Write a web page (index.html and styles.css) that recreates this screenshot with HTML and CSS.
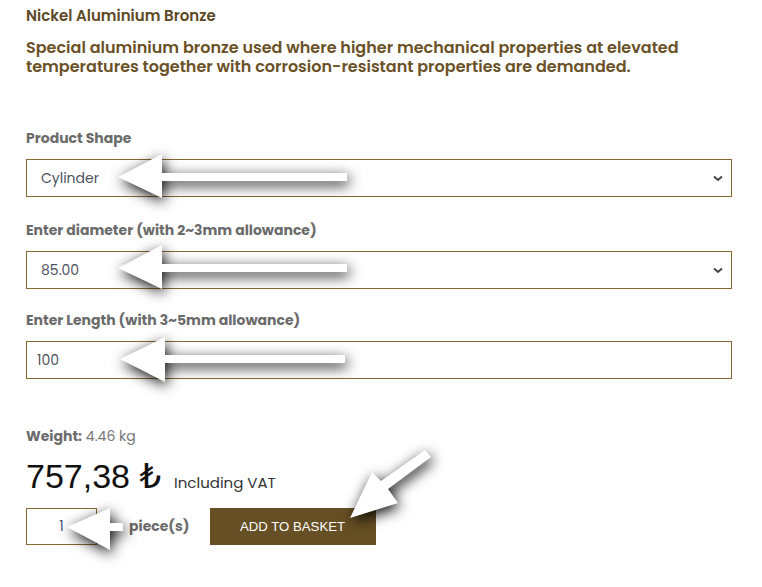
FILE: index.html
```html
<!DOCTYPE html>
<html lang="en">
<head>
    <meta charset="UTF-8">
    <title>Nickel Aluminium Bronze</title>
    <link rel="stylesheet" href="styles.css">
</head>
<body>
    <div class="product">
        <h2 class="title">Nickel Aluminium Bronze</h2>
        <p class="desc">Special aluminium bronze used where higher mechanical properties at elevated temperatures together with corrosion-resistant properties are demanded.</p>

        <div class="field">
            <label>Product Shape</label>
            <div class="select_wrap">
                <select><option>Cylinder</option></select>
                <svg class="chev" width="10" height="7" viewBox="0 0 10 7"><path d="M1 1.5 L5 5 L9 1.5" fill="none" stroke="#444" stroke-width="2"/></svg>
            </div>
        </div>
        <div class="field">
            <label>Enter diameter (with 2~3mm allowance)</label>
            <div class="select_wrap">
                <select><option>85.00</option></select>
                <svg class="chev" width="10" height="7" viewBox="0 0 10 7"><path d="M1 1.5 L5 5 L9 1.5" fill="none" stroke="#444" stroke-width="2"/></svg>
            </div>
        </div>
        <div class="field last">
            <label>Enter Length (with 3~5mm allowance)</label>
            <input class="txt" type="text" value="100">
        </div>

        <div class="weight"><b>Weight:</b> 4.46 kg</div>
        <div class="price"><span class="amount">757,38 ₺</span> <span class="vat">Including VAT</span></div>
        <div class="buy">
            <input class="qty" type="text" value="1">
            <span class="pcs">piece(s)</span>
            <button class="basket">ADD TO BASKET</button>
        </div>
    </div>

    <!-- annotation arrows -->
    <svg class="arrows" width="762" height="587" viewBox="0 0 762 587">
        <g fill="#fff">
            <polygon points="118,177 162,154 162,173 347,173 347,181 162,181 162,198"/>
            <polygon points="118,268 162,245 162,264 347,264 347,272 162,272 162,289"/>
            <polygon points="120,359 165,337 165,355 345,355 345,363 165,363 165,382"/>
            <polygon points="67,527 110,508 110,523 123,523 123,531 110,531 110,550"/>
            <polygon points="350,518 372,472 381,481 425,450 431,457 388,489 398,503"/>
        </g>
    </svg>
</body>
</html>
```

FILE: styles.css
```css
* {
    margin: 0;
    padding: 0;
    box-sizing: border-box;
}
body {
    background: #fff;
    font-family: "Poppins", "Inter", "Open Sans", sans-serif;
}
.product {
    width: 732px;
    padding: 7px 0 0 26px;
}
.title {
    font-size: 15px;
    font-weight: 600;
    line-height: 18px;
    color: #5e4a26;
}
.desc {
    margin-top: 13px;
    font-size: 16px;
    font-weight: 600;
    line-height: 19px;
    color: #6a5127;
}
/*form*/
.field {
    margin-top: 25px;
}
.desc + .field {
    margin-top: 54px;
}
.field.last {
    margin-top: 23px;
}
.field label {
    display: block;
    font-size: 14px;
    font-weight: 700;
    line-height: 17px;
    color: #6b6b6b;
    margin-bottom: 12px;
}
.select_wrap {
    position: relative;
}
.field select,
.field .txt {
    display: block;
    width: 100%;
    height: 38px;
    padding: 0 14px;
    border: 1px solid #86692f;
    border-radius: 0;
    background: #fff;
    font-family: inherit;
    font-size: 14px;
    color: #4d5260;
    outline: none;
    -webkit-appearance: none;
    appearance: none;
}
.field .txt {
    padding: 0 10px;
}
.chev {
    position: absolute;
    right: 9px;
    top: 16px;
}
/*price*/
.weight {
    margin-top: 49px;
    font-size: 14px;
    line-height: 17px;
    color: #777;
}
.weight b {
    color: #6b6b6b;
}
.price {
    margin-top: 11px;
    display: flex;
    align-items: baseline;
    gap: 13px;
    height: 36px;
}
.price .amount {
    font-family: "Liberation Sans", "DejaVu Sans", sans-serif;
    font-size: 34px;
    color: #111;
}
.price .vat {
    font-size: 15px;
    color: #333;
}
.buy {
    margin-top: 16px;
    display: flex;
    align-items: center;
}
.qty {
    width: 71px;
    height: 37px;
    border: 1px solid #86692f;
    text-align: center;
    font-family: inherit;
    font-size: 14px;
    color: #4a4f7a;
    outline: none;
}
.pcs {
    margin-left: 32px;
    font-size: 14px;
    font-weight: 700;
    color: #6b6b6b;
}
.basket {
    margin-left: 20px;
    width: 166px;
    height: 37px;
    border: none;
    background: #664f24;
    color: #fff;
    font-family: "Liberation Sans", Arial, sans-serif;
    font-size: 13.2px;
}
.arrows {
    position: absolute;
    left: 0;
    top: 0;
    pointer-events: none;
    filter: drop-shadow(2px 4px 7px rgba(0,0,0,0.95));
}
```
